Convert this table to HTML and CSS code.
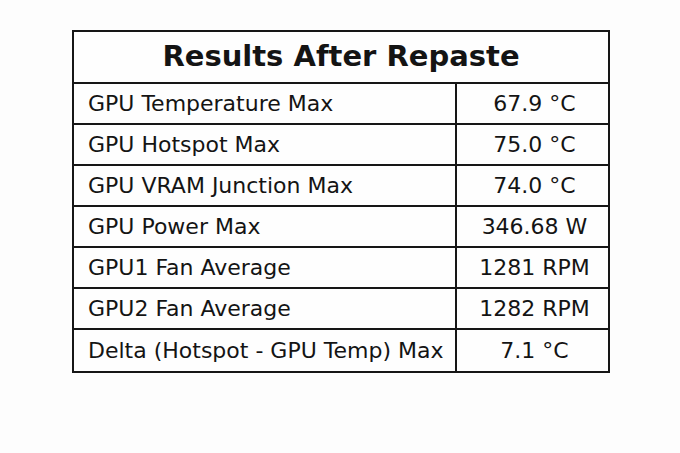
FILE: index.html
```html
<!DOCTYPE html>
<html>
<head>
<meta charset="utf-8">
<link rel="stylesheet" href="styles.css">
</head>
<body>
<div class="sheet">
  <div class="title">Results After Repaste</div>
  <div class="row"><div class="label">GPU Temperature Max</div><div class="value">67.9 °C</div></div>
  <div class="row"><div class="label">GPU Hotspot Max</div><div class="value">75.0 °C</div></div>
  <div class="row"><div class="label">GPU VRAM Junction Max</div><div class="value">74.0 °C</div></div>
  <div class="row"><div class="label">GPU Power Max</div><div class="value">346.68 W</div></div>
  <div class="row"><div class="label">GPU1 Fan Average</div><div class="value">1281 RPM</div></div>
  <div class="row"><div class="label">GPU2 Fan Average</div><div class="value">1282 RPM</div></div>
  <div class="row last"><div class="label">Delta (Hotspot - GPU Temp) Max</div><div class="value">7.1 °C</div></div>
</div>
</body>
</html>
```
FILE: styles.css
```css
html, body {
  margin: 0;
  background: #fdfdfd;
}
body {
  width: 680px;
  height: 453px;
  overflow: hidden;
  font-family: "DejaVu Sans", sans-serif;
  color: #141414;
}
.sheet {
  box-sizing: border-box;
  width: 538px;
  margin: 30px 0 0 72px;
  border: 2px solid #161616;
  background: #fefefe;
}
.title {
  box-sizing: border-box;
  height: 52px;
  border-bottom: 2px solid #161616;
  display: flex;
  align-items: center;
  justify-content: center;
  font-weight: bold;
  font-size: 29px;
  padding-bottom: 2px;
}
.row {
  box-sizing: border-box;
  display: grid;
  grid-template-columns: 383px 1fr;
  height: 41px;
  border-bottom: 2px solid #161616;
  font-size: 22px;
}
.row.last {
  border-bottom: none;
  height: 41px;
}
.label {
  box-sizing: border-box;
  display: flex;
  align-items: center;
  padding-left: 14px;
  border-right: 2px solid #161616;
  white-space: nowrap;
}
.value {
  display: flex;
  align-items: center;
  justify-content: center;
  white-space: nowrap;
  padding-left: 4px;
}
```
